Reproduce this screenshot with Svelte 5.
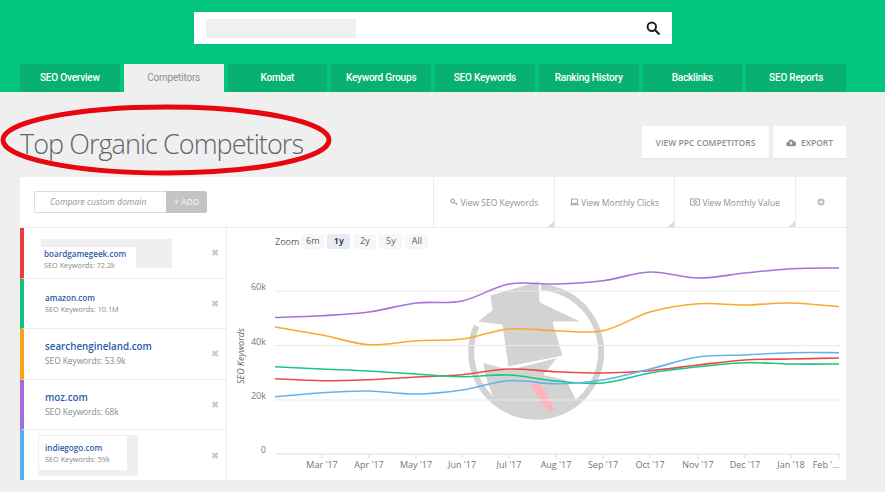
<script lang="ts">
  const tabs = ['SEO Overview', 'Competitors', 'Kombat', 'Keyword Groups', 'SEO Keywords', 'Ranking History', 'Backlinks', 'SEO Reports'];
  const ranges = ['6m', '1y', '2y', '5y', 'All'];

  const competitors = [
    { name: 'boardgamegeek.com', sub: 'SEO Keywords: 72.2k', color: '#ee3b3b', small: true, patch: 'one' },
    { name: 'amazon.com', sub: 'SEO Keywords: 10.1M', color: '#14c27f', small: true, patch: '' },
    { name: 'searchengineland.com', sub: 'SEO Keywords: 53.9k', color: '#f7a21b', small: false, patch: '' },
    { name: 'moz.com', sub: 'SEO Keywords: 68k', color: '#a06fd6', small: false, patch: '' },
    { name: 'indiegogo.com', sub: 'SEO Keywords: 59k', color: '#58aeec', small: true, patch: 'two' },
  ];

  // screen x of each sample, first is chart start then one per month
  const xs = [275, 322, 369, 416, 462, 509, 556, 603, 650, 698, 745, 791, 839];
  const series = [
    { color: '#ea4a45', ys: [378.7, 380.7, 379.7, 377, 374.7, 369, 371.7, 373, 370.7, 365, 360, 359, 358] },
    { color: '#1cc585', ys: [366.7, 369, 371, 374, 376.7, 375, 381, 383, 373, 366.7, 362.7, 364, 364] },
    { color: '#f9ab2e', ys: [327, 335, 344.7, 340.7, 339, 329, 330.7, 330.7, 312, 303.7, 305, 303, 306.7] },
    { color: '#a374d8', ys: [317.5, 315.7, 312, 303, 301, 284, 284, 280.7, 272, 278, 273, 268.7, 268] },
    { color: '#66b2ee', ys: [396.7, 392.7, 391, 394, 390, 380.7, 383.7, 380, 369, 357, 355, 352.7, 352.7] },
  ];
  const grid = [
    { y: 291, label: '60k' },
    { y: 345.5, label: '40k' },
    { y: 400, label: '20k' },
    { y: 454, label: '0' },
  ];
  const months = ["Mar '17", "Apr '17", "May '17", "Jun '17", "Jul '17", "Aug '17", "Sep '17", "Oct '17", "Nov '17", "Dec '17", "Jan '18", "Feb '..."];

  // Catmull-Rom through the samples, flattened a bit
  function smooth(ys: number[]): string {
    let d = `M${xs[0]} ${ys[0]}`;
    for (let i = 0; i < ys.length - 1; i++) {
      const x0 = xs[Math.max(i - 1, 0)], y0 = ys[Math.max(i - 1, 0)];
      const x1 = xs[i], y1 = ys[i];
      const x2 = xs[i + 1], y2 = ys[i + 1];
      const x3 = xs[Math.min(i + 2, xs.length - 1)], y3 = ys[Math.min(i + 2, ys.length - 1)];
      const k = 0.17;
      const c1x = x1 + (x2 - x0) * k, c1y = y1 + (y2 - y0) * k;
      const c2x = x2 - (x3 - x1) * k, c2y = y2 - (y3 - y1) * k;
      d += ` C${c1x.toFixed(1)} ${c1y.toFixed(1)} ${c2x.toFixed(1)} ${c2y.toFixed(1)} ${x2} ${y2}`;
    }
    return d;
  }
</script>

<header class="top">
  <div class="search">
    <span class="blank"></span>
    <svg class="search-icon" viewBox="0 0 14 14" width="14" height="14">
      <circle cx="5.8" cy="5.8" r="4.2" fill="none" stroke="#17222a" stroke-width="2" />
      <path d="M9 9l3.8 3.8" stroke="#17222a" stroke-width="2.2" stroke-linecap="round" />
    </svg>
  </div>
  <nav class="tabs">
    {#each tabs as tab, i}
      <div class="tab" class:active={i === 1}>{tab}</div>
    {/each}
  </nav>
</header>

<main class="page">
  <div class="heading">
    <h1>Top Organic Competitors</h1>
    <svg class="ring" viewBox="0 0 336 78" width="336" height="78">
      <ellipse cx="166" cy="39" rx="163" ry="33" fill="none" stroke="#e8060f" stroke-width="5" />
    </svg>
    <div class="actions">
      <button class="action ppc">VIEW PPC COMPETITORS</button>
      <button class="action export">
        <svg viewBox="0 0 12 10" width="10" height="9">
          <path d="M3 9.5a2.6 2.6 0 0 1-.4-5.2A3.5 3.5 0 0 1 9.3 3.6 2.9 2.9 0 0 1 9.2 9.5z" fill="#8b8f91" />
          <path d="M6 3.4L8 5.8H6.8v2H5.2v-2H4z" fill="#fff" />
        </svg>
        EXPORT
      </button>
    </div>
  </div>

  <section class="card">
    <div class="toolbar">
      <div class="compare">
        <div class="domain">Compare custom domain</div>
        <div class="add">+ ADD</div>
      </div>
      <div class="views">
        <div class="view wide">
          <svg viewBox="0 0 12 10" width="9" height="8">
            <circle cx="3.6" cy="3.6" r="2.6" fill="none" stroke="#8f9396" stroke-width="1.3" />
            <path d="M5.6 5.6L10 9M8 7.4l1.4-1.2" fill="none" stroke="#8f9396" stroke-width="1.2" />
          </svg>
          View SEO Keywords
        </div>
        <div class="view wide">
          <svg viewBox="0 0 12 10" width="9" height="8">
            <rect x="2" y="1" width="8" height="6" fill="none" stroke="#8f9396" stroke-width="1.1" />
            <path d="M0 8.7h12" stroke="#8f9396" stroke-width="1.2" />
          </svg>
          View Monthly Clicks
        </div>
        <div class="view wide">
          <svg viewBox="0 0 12 10" width="10" height="8">
            <rect x="0.6" y="1.2" width="10.8" height="7.6" fill="none" stroke="#8f9396" stroke-width="1.1" />
            <circle cx="6" cy="5" r="1.8" fill="none" stroke="#8f9396" stroke-width="1.1" />
          </svg>
          View Monthly Value
        </div>
        <div class="view gear">
          <svg viewBox="0 0 10 10" width="8" height="8">
            <circle cx="5" cy="5" r="3" fill="none" stroke="#b9bcbe" stroke-width="2" />
            <circle cx="5" cy="5" r="4.4" fill="none" stroke="#b9bcbe" stroke-width="1" stroke-dasharray="1.4 1.4" />
          </svg>
        </div>
      </div>
    </div>

    <div class="body">
      <ul class="list">
        {#each competitors as c}
          <li class="row" style="border-left-color: {c.color}">
            {#if c.patch}
              <span class="patch {c.patch}"><span class="cover"></span></span>
            {/if}
            <div class="info {c.patch}" class:small={c.small}>
              <div class="name">{c.name}</div>
              <div class="sub">{c.sub}</div>
            </div>
            <span class="remove">✖</span>
          </li>
        {/each}
      </ul>

      <div class="chart">
        <svg viewBox="227 228 619 252" width="619" height="252">
          <!-- watermark -->
          <g fill="#d3d3d3">
            <path d="M541 287A65 65 0 1 1 476.5 326" fill="none" stroke="#d3d3d3" stroke-width="6" />
            <path d="M483.5 363L509 370L557 358L543 375L566 380L577 402L575 405A65 65 0 0 1 497 403Q486 385 483.5 363z" />
            <path d="M490 295L539 281L540 302L582 322L553 322L563 356L508 367L502 325L477 322L492 310z" stroke="#fff" stroke-width="1" />
            <path d="M530 385L540 383L555 410L548 412z" fill="#fcb6bb" />
          </g>

          {#each grid as g}
            <line x1="275" x2="840" y1={g.y} y2={g.y} stroke={g.label === '0' ? '#d8dde8' : '#e9e9e9'} />
            <text class="ylabel" x="266" y={g.y - 1} text-anchor="end">{g.label}</text>
          {/each}
          <text class="ytitle" transform="translate(244 384) rotate(-90)">SEO Keywords</text>

          {#each months as m, i}
            <line x1={xs[i + 1]} x2={xs[i + 1]} y1="454" y2="459" stroke="#d8dde8" />
            <text class="xlabel" x={i === 11 ? 826 : xs[i + 1]} y="468" text-anchor="middle">{m}</text>
          {/each}

          {#each series as s}
            <path d={smooth(s.ys)} fill="none" stroke={s.color} stroke-width="1.6" />
          {/each}
        </svg>

        <div class="zoom">
          <span class="zoom-label">Zoom</span>
          {#each ranges as r}
            <span class="range" class:on={r === '1y'}>{r}</span>
          {/each}
        </div>
      </div>
    </div>
  </section>
</main>

<style>
  :global(body) {
    background: #efefef;
    overflow: hidden;
  }

  .top {
    background: #03c47d;
    height: 92px;
    padding: 0 39px 0 20px;
    display: flex;
    flex-direction: column;
    align-items: stretch;
  }

  .search {
    width: 478px;
    height: 32px;
    margin: 12px 0 0 174px;
    background: #fff;
    display: flex;
    align-items: center;
    justify-content: space-between;
    padding: 0 12px;
    box-sizing: border-box;
  }

  .blank {
    width: 150px;
    height: 19px;
    background: #f0f0f0;
  }

  .tabs {
    display: flex;
    gap: 4px;
    margin-top: 20px;
  }

  .tab {
    flex: 1;
    height: 28px;
    text-align: center;
    background: #08b072;
    color: #fff;
    font: 500 10px/28px Roboto, sans-serif;
    letter-spacing: -0.2px;
  }

  .tab.active {
    background: #efefef;
    color: #8b8f91;
    font-weight: 400;
  }

  .page {
    padding: 0 39px 0 20px;
    font-family: 'Open Sans', sans-serif;
  }

  .heading {
    position: relative;
    height: 85px;
    display: flex;
    justify-content: space-between;
    align-items: flex-start;
  }

  h1 {
    margin: 34px 0 0;
    font-size: 27px;
    line-height: 36px;
    font-weight: 300;
    letter-spacing: -0.95px;
    color: #5f6468;
  }

  .ring {
    position: absolute;
    left: -20px;
    top: 9px;
  }

  .actions {
    display: flex;
    gap: 4px;
    margin-top: 34px;
  }

  .action {
    height: 32px;
    border: none;
    background: #fff;
    color: #8b8f91;
    font: 600 8.5px 'Open Sans', sans-serif;
    padding: 0;
    box-shadow: 0 1px 1px #e6e6e6;
  }

  .ppc {
    width: 127px;
  }

  .export {
    width: 73px;
    display: flex;
    align-items: center;
    justify-content: center;
    gap: 5px;
  }

  .card {
    background: #fff;
    box-shadow: 0 1px 1px #e8e8e8;
  }

  .toolbar {
    height: 50px;
    display: flex;
    justify-content: space-between;
    border-bottom: 1px solid #ececec;
  }

  .compare {
    display: flex;
    margin: 14px 0 0 14px;
    height: 22px;
  }

  .domain {
    width: 132px;
    box-sizing: border-box;
    border: 1px solid #dcdcdc;
    border-right: none;
    border-radius: 2px 0 0 2px;
    padding-left: 15px;
    font: italic 8.6px/20px 'Open Sans', sans-serif;
    color: #8e9295;
  }

  .add {
    width: 41px;
    background: #c4c4c4;
    color: #eeeeee;
    font: 600 8.5px/22px 'Open Sans', sans-serif;
    text-align: center;
    border-radius: 0 2px 2px 0;
  }

  .views {
    display: flex;
  }

  .view {
    position: relative;
    height: 50px;
    box-sizing: border-box;
    border-left: 1px solid #ececec;
    display: flex;
    align-items: center;
    justify-content: center;
    gap: 2px;
    font-size: 8.5px;
    color: #8e9295;
  }

  .view.wide {
    width: 120.67px;
  }

  .view.wide::after {
    content: '';
    position: absolute;
    right: 0;
    bottom: 0;
    border-style: solid;
    border-width: 0 0 6px 6px;
    border-color: transparent transparent #dcdcdc transparent;
  }

  .view.gear {
    width: 51px;
  }

  .body {
    display: flex;
    height: 252px;
  }

  .list {
    list-style: none;
    margin: 0;
    padding: 0;
    width: 207px;
    border-right: 1px solid #ececec;
    box-sizing: border-box;
    display: flex;
    flex-direction: column;
  }

  .row {
    position: relative;
    flex: 1;
    display: flex;
    align-items: center;
    justify-content: space-between;
    border-left: 4px solid;
    border-bottom: 1px solid #ececec;
    padding: 0 7px 0 21px;
  }

  .row:last-child {
    border-bottom: none;
  }

  .patch {
    position: absolute;
    background: #efefef;
  }

  .patch.one {
    left: 17px;
    top: 11px;
    width: 131px;
    height: 29px;
  }

  .patch.one .cover {
    position: absolute;
    left: 0;
    top: 8px;
    width: 95px;
    height: 21px;
    background: #fff;
  }

  .patch.two {
    left: 14px;
    top: 5px;
    width: 100px;
    height: 41px;
  }

  .patch.two .cover {
    position: absolute;
    left: 1px;
    top: 1px;
    width: 88px;
    height: 34px;
    background: #fff;
  }

  .info {
    position: relative;
  }

  .info.one {
    margin: 14px 0 0 -1px;
  }

  .info.two {
    margin-top: -3px;
  }

  .name {
    font-size: 9.8px;
    line-height: 14px;
    font-weight: 600;
    color: #2c5ca8;
  }

  .sub {
    font-size: 8.3px;
    line-height: 14px;
    color: #85898c;
  }

  .info.small .name {
    font-size: 8.1px;
    line-height: 12px;
  }

  .info.small .sub {
    font-size: 7.3px;
    line-height: 11px;
  }

  .remove {
    font-size: 9.5px;
    color: #c9c9c9;
    font-family: 'DejaVu Sans', sans-serif;
  }

  .chart {
    position: relative;
    flex: 1;
    min-width: 0;
  }

  .chart svg {
    display: block;
  }

  .zoom {
    position: absolute;
    left: 48px;
    top: 6px;
    display: flex;
    align-items: center;
    gap: 3px;
    font-size: 9px;
    color: #5c6063;
  }

  .zoom-label {
    margin-right: -1px;
  }

  .range {
    width: 23px;
    height: 15px;
    line-height: 14px;
    text-align: center;
    background: #f7f7f7;
    border-radius: 2px;
  }

  .range.on {
    background: #e6ebf5;
    color: #222;
    font-weight: 600;
  }

  .ylabel,
  .xlabel {
    font: 9px 'Open Sans', sans-serif;
    fill: #72767a;
  }

  .ytitle {
    font: italic 9px 'Open Sans', sans-serif;
    fill: #666a6e;
  }
</style>
